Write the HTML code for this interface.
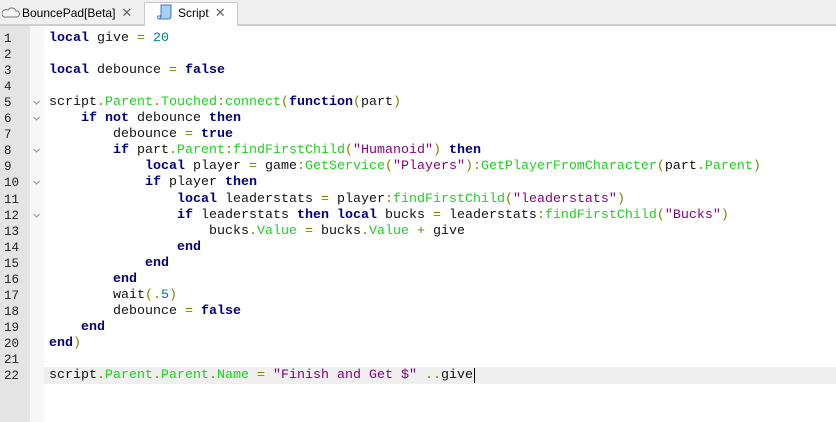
<!DOCTYPE html>
<html><head><meta charset="utf-8"><style>
*{margin:0;padding:0;box-sizing:border-box}
body{width:836px;height:422px;overflow:hidden;background:#fff;font-family:"Liberation Mono",monospace;position:relative}
#tabs{position:absolute;left:0;top:0;width:836px;height:26px;background:#f0f0f0;border-bottom:2px solid #cfcfcf;font-family:"Liberation Sans",sans-serif;font-size:12px;color:#000}
.tab{position:absolute;top:3px;height:23px;line-height:20px}
#t1{left:2px;width:140px}
#t2{left:144px;width:94px;background:#fff;border:1px solid #c8c8c8;border-bottom:none;top:2px;height:24px}
.x{color:#666;margin-left:6px;font-size:13px}
#gut{position:absolute;left:0;top:26px;width:30px;height:396px;background:#e4e4e4}
#fold{position:absolute;left:30px;top:26px;width:14px;height:396px;background:#f7f7f7}
#cur{position:absolute;left:44px;top:367px;width:792px;height:17px;background:#efefef}
.ln{position:absolute;left:4px;font-size:12.5px;color:#222;height:16px;line-height:16px}
.fm{position:absolute;left:33px;width:7px;height:7px}
.code{position:absolute;left:49px;font-size:13.33px;height:16px;line-height:16px;white-space:pre;color:#111}
.k{color:#00007f;font-weight:bold}
.n{color:#007f7f}
.o{color:#7f7f00}
.s{color:#7f007f}
.m{color:#1fd01f}
</style></head><body>
<div id="tabs">
<div class="tab" id="t1"><svg width="18" height="12" viewBox="0 0 18 12" style="vertical-align:-1px;margin-right:2px"><path d="M2 11 H15 A3 3 0 0 0 14 5 A4.5 4.5 0 0 0 6 4 A3.5 3.5 0 0 0 2 11Z" fill="#f4f4f4" stroke="#777"/></svg>BouncePad[Beta]<span class="x">✕</span></div>
<div class="tab" id="t2"><svg width="16" height="17" viewBox="0 0 16 17" style="vertical-align:-4px;margin:0 5px 0 12px"><path d="M4 1 H14 V12 Q14 15 11 15 H2 Q4 14 4 11Z" fill="#a8d0f0" stroke="#3b78c0"/><path d="M2 15 Q0 14 1 12 H4" fill="none" stroke="#3b78c0"/></svg>Script<span class="x">✕</span></div>
</div>
<div id="gut"></div><div id="fold"></div><div id="cur"></div>
<div id="L"></div>
<script>
var lines=[
'<span class="k">local</span> give <span class="o">=</span> <span class="n">20</span>',
'',
'<span class="k">local</span> debounce <span class="o">=</span> <span class="k">false</span>',
'',
'script<span class="o">.</span><span class="m">Parent</span><span class="o">.</span><span class="m">Touched</span><span class="o">:</span><span class="m">connect</span><span class="o">(</span><span class="k">function</span><span class="o">(</span>part<span class="o">)</span>',
'    <span class="k">if not</span> debounce <span class="k">then</span>',
'        debounce <span class="o">=</span> <span class="k">true</span>',
'        <span class="k">if</span> part<span class="o">.</span><span class="m">Parent</span><span class="o">:</span><span class="m">findFirstChild</span><span class="o">(</span><span class="s">"Humanoid"</span><span class="o">)</span> <span class="k">then</span>',
'            <span class="k">local</span> player <span class="o">=</span> game<span class="o">:</span><span class="m">GetService</span><span class="o">(</span><span class="s">"Players"</span><span class="o">):</span><span class="m">GetPlayerFromCharacter</span><span class="o">(</span>part<span class="o">.</span><span class="m">Parent</span><span class="o">)</span>',
'            <span class="k">if</span> player <span class="k">then</span>',
'                <span class="k">local</span> leaderstats <span class="o">=</span> player<span class="o">:</span><span class="m">findFirstChild</span><span class="o">(</span><span class="s">"leaderstats"</span><span class="o">)</span>',
'                <span class="k">if</span> leaderstats <span class="k">then local</span> bucks <span class="o">=</span> leaderstats<span class="o">:</span><span class="m">findFirstChild</span><span class="o">(</span><span class="s">"Bucks"</span><span class="o">)</span>',
'                    bucks<span class="o">.</span><span class="m">Value</span> <span class="o">=</span> bucks<span class="o">.</span><span class="m">Value</span> <span class="o">+</span> give',
'                <span class="k">end</span>',
'            <span class="k">end</span>',
'        <span class="k">end</span>',
'        wait<span class="o">(.</span><span class="n">5</span><span class="o">)</span>',
'        debounce <span class="o">=</span> <span class="k">false</span>',
'    <span class="k">end</span>',
'<span class="k">end</span><span class="o">)</span>',
'',
'script<span class="o">.</span><span class="m">Parent</span><span class="o">.</span><span class="m">Parent</span><span class="o">.</span><span class="m">Name</span> <span class="o">=</span> <span class="s">"Finish and Get $"</span> <span class="o">..</span>give<span style="border-left:1px solid #000;margin-left:1px"></span>'
];
var folds=[5,6,8,10,12];
var h='';
for(var i=0;i<lines.length;i++){
 var y=31+i*16.05;
 h+='<div class="ln" style="top:'+y+'px">'+(i+1)+'</div>';
 h+='<div class="code" style="top:'+y+'px">'+lines[i]+'</div>';
 if(folds.indexOf(i+1)>=0)h+='<svg class="fm" style="top:'+(y+4)+'px" viewBox="0 0 7 7"><path d="M0.5 2 L3.5 5 L6.5 2" fill="none" stroke="#999"/></svg>';
}
document.getElementById('L').innerHTML=h;
</script>
</body></html>
